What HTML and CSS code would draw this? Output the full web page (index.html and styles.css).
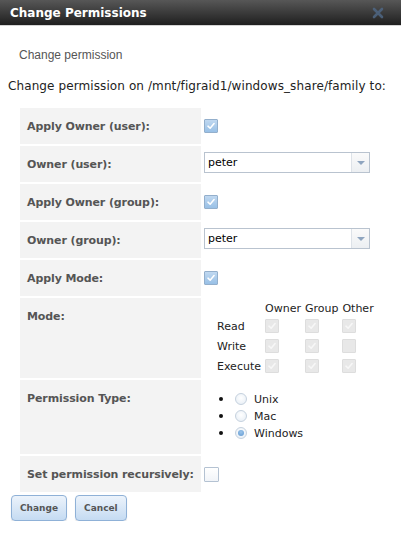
FILE: index.html
```html
<!DOCTYPE html>
<html lang="en">
<head>
    <meta charset="UTF-8">
    <meta name="viewport" content="width=device-width, initial-scale=1.0">
    <link rel="stylesheet" href="styles.css">
    <title>Change Permissions</title>
</head>
<body>
    <div class="dialog">
        <header class="titlebar">
            <span class="title">Change Permissions</span>
            <span class="close">
                <svg width="12" height="12" viewBox="0 0 12 12">
                    <path d="M2 2 L10 10 M10 2 L2 10" stroke="#4f6784" stroke-width="2.6" stroke-linecap="round"/>
                </svg>
            </span>
        </header>

        <main class="content">
            <p class="subtitle">Change permission</p>
            <p class="intro">Change permission on /mnt/figraid1/windows_share/family to:</p>

            <table class="perm">
                <tr>
                    <th>Apply Owner (user):</th>
                    <td class="mid"><span class="chk on"><svg viewBox="0 0 14 14"><path d="M3.5 7.2 L6 9.6 L10.6 4.2"/></svg></span></td>
                </tr>
                <tr>
                    <th>Owner (user):</th>
                    <td class="mid">
                        <div class="select"><span class="val">peter</span><span class="arrow"></span></div>
                    </td>
                </tr>
                <tr>
                    <th>Apply Owner (group):</th>
                    <td class="mid"><span class="chk on"><svg viewBox="0 0 14 14"><path d="M3.5 7.2 L6 9.6 L10.6 4.2"/></svg></span></td>
                </tr>
                <tr>
                    <th>Owner (group):</th>
                    <td class="mid">
                        <div class="select"><span class="val">peter</span><span class="arrow"></span></div>
                    </td>
                </tr>
                <tr>
                    <th>Apply Mode:</th>
                    <td class="mid"><span class="chk on"><svg viewBox="0 0 14 14"><path d="M3.5 7.2 L6 9.6 L10.6 4.2"/></svg></span></td>
                </tr>
                <tr>
                    <th>Mode:</th>
                    <td class="top mode-cell">
                        <table class="mode">
                            <tr class="head">
                                <td></td>
                                <td>Owner</td>
                                <td>Group</td>
                                <td>Other</td>
                            </tr>
                            <tr>
                                <td>Read</td>
                                <td><span class="chk off on"><svg viewBox="0 0 14 14"><path d="M3.5 7.2 L6 9.6 L10.6 4.2"/></svg></span></td>
                                <td><span class="chk off on"><svg viewBox="0 0 14 14"><path d="M3.5 7.2 L6 9.6 L10.6 4.2"/></svg></span></td>
                                <td><span class="chk off on"><svg viewBox="0 0 14 14"><path d="M3.5 7.2 L6 9.6 L10.6 4.2"/></svg></span></td>
                            </tr>
                            <tr>
                                <td>Write</td>
                                <td><span class="chk off on"><svg viewBox="0 0 14 14"><path d="M3.5 7.2 L6 9.6 L10.6 4.2"/></svg></span></td>
                                <td><span class="chk off on"><svg viewBox="0 0 14 14"><path d="M3.5 7.2 L6 9.6 L10.6 4.2"/></svg></span></td>
                                <td><span class="chk off"></span></td>
                            </tr>
                            <tr>
                                <td>Execute</td>
                                <td><span class="chk off on"><svg viewBox="0 0 14 14"><path d="M3.5 7.2 L6 9.6 L10.6 4.2"/></svg></span></td>
                                <td><span class="chk off on"><svg viewBox="0 0 14 14"><path d="M3.5 7.2 L6 9.6 L10.6 4.2"/></svg></span></td>
                                <td><span class="chk off on"><svg viewBox="0 0 14 14"><path d="M3.5 7.2 L6 9.6 L10.6 4.2"/></svg></span></td>
                            </tr>
                        </table>
                    </td>
                </tr>
                <tr>
                    <th>Permission Type:</th>
                    <td class="top">
                        <ul class="types">
                            <li><span class="radio"></span>Unix</li>
                            <li><span class="radio"></span>Mac</li>
                            <li><span class="radio sel"></span>Windows</li>
                        </ul>
                    </td>
                </tr>
                <tr>
                    <th>Set permission recursively:</th>
                    <td class="mid"><span class="chk empty"></span></td>
                </tr>
            </table>

            <div class="actions">
                <button type="submit" class="btn">Change</button>
                <button type="button" class="btn">Cancel</button>
            </div>
        </main>
    </div>
</body>
</html>
```

FILE: styles.css
```css
body {
    margin: 0;
    padding: 0;
    background: #fff;
    font-family: "DejaVu Sans", Verdana, sans-serif;
    color: #222;
}

.titlebar {
    height: 25px;
    display: flex;
    align-items: center;
    justify-content: space-between;
    padding: 0 17px 0 10px;
    background: linear-gradient(to bottom, #575757, #1f1f1f);
    border-bottom: 1px solid #d4d4d4;
}

.title {
    color: #fff;
    font-weight: bold;
    font-size: 12px;
}

.close {
    display: flex;
    opacity: 0.85;
    filter: blur(0.5px);
}

.subtitle {
    margin: 22px 0 0 19px;
    font-family: "Liberation Sans", Arial, sans-serif;
    font-size: 12px;
    line-height: 14px;
    color: #555;
}

.intro {
    margin: 16px 0 0 8px;
    font-size: 12px;
    line-height: 16px;
    white-space: nowrap;
    letter-spacing: 0.1px;
    color: #222;
}

/* main form table */
.perm {
    margin: 12px 0 0 20px;
    border-collapse: separate;
    border-spacing: 0 2px;
}

.perm th {
    width: 167px;
    padding: 12px 7px 11px 7px;
    background: #f3f3f3;
    color: #555;
    font-size: 11px;
    line-height: 13px;
    font-weight: bold;
    letter-spacing: -0.1px;
    text-align: left;
    vertical-align: top;
    white-space: nowrap;
}

.perm td {
    padding-left: 3px;
    font-size: 11px;
}

.perm td.mid {
    vertical-align: middle;
}

.perm td.top {
    vertical-align: top;
}

/* checkboxes */
.chk {
    display: inline-block;
    box-sizing: border-box;
    width: 14px;
    height: 14px;
    border: 1px solid #93afcc;
    border-radius: 1px;
    vertical-align: middle;
}

.chk svg {
    display: block;
    width: 12px;
    height: 12px;
}

.chk svg path {
    fill: none;
    stroke: #fff;
    stroke-width: 1.8;
    stroke-linecap: round;
    stroke-linejoin: round;
}

.chk.on {
    background: linear-gradient(to bottom, #c0d8f0, #98c0e6);
}

.chk.off {
    background: #e8e8e8;
    border-color: #dddddd;
}

.chk.off svg path {
    stroke: #f7f7f7;
}

.chk.empty {
    width: 15px;
    height: 15px;
    border-color: #b4c2d2;
    background: linear-gradient(to bottom, #fff, #f1f4f8);
}

/* select boxes */
.select {
    display: flex;
    width: 166px;
    height: 21px;
    box-sizing: border-box;
    border: 1px solid #b9c3cf;
    background: #fff;
    margin-bottom: 3px;
}

.select .val {
    flex: 1;
    padding-left: 3px;
    line-height: 19px;
    font-size: 11px;
    color: #000;
}

.select .arrow {
    width: 17px;
    border-left: 1px solid #dde2e8;
    background: linear-gradient(to bottom, #fafafa, #eceff2);
    position: relative;
}

.select .arrow::after {
    content: "";
    position: absolute;
    left: 5px;
    top: 8px;
    border-left: 4px solid transparent;
    border-right: 4px solid transparent;
    border-top: 4px solid #8fa5bf;
}

/* mode grid */
.mode-cell {
    padding-top: 2px;
    padding-bottom: 2px;
}

.mode {
    margin-left: 13px;
    border-collapse: collapse;
}

.mode td {
    padding: 0 4px 0 0;
    height: 20px;
    font-size: 11px;
    color: #222;
    text-align: left;
    vertical-align: middle;
}

.mode .head td {
    height: 16px;
}

/* permission type radios */
.types {
    margin: 10px 0 11px 0;
    padding-left: 15px;
    list-style: none;
    font-size: 11px;
    line-height: 17px;
    color: #222;
}

.types li::before {
    content: "";
    display: inline-block;
    width: 4px;
    height: 4px;
    margin-right: 12px;
    border-radius: 50%;
    background: #111;
    vertical-align: 2px;
}

.radio {
    display: inline-block;
    box-sizing: border-box;
    width: 12px;
    height: 12px;
    margin-right: 7px;
    border: 1px solid #c5d1de;
    border-radius: 50%;
    background: radial-gradient(circle at 50% 40%, #fff, #e4ecf4);
    vertical-align: -2px;
    position: relative;
}

.radio.sel::after {
    content: "";
    position: absolute;
    left: 2px;
    top: 2px;
    width: 6px;
    height: 6px;
    border-radius: 50%;
    background: radial-gradient(circle at 50% 35%, #9cc4ea, #5f98d0);
}

/* buttons */
.actions {
    display: flex;
    gap: 8px;
    margin: 1px 0 0 11px;
}

.btn {
    height: 26px;
    padding: 0 8px;
    border: 1px solid #8fb1d7;
    border-radius: 4px;
    background: linear-gradient(to bottom, #ecf3fb, #c5dbf2);
    box-shadow: 0 1px 1px rgba(0, 0, 0, 0.12);
    font-family: "DejaVu Sans", Verdana, sans-serif;
    font-size: 9px;
    font-weight: bold;
    color: #555;
    cursor: pointer;
}
```
